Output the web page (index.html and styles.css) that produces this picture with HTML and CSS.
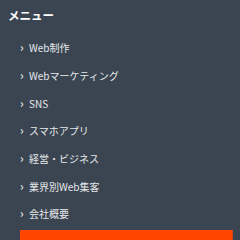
FILE: index.html
```html
<!DOCTYPE html>
<html lang="ja">
<head>
  <meta charset="UTF-8">
  <meta name="viewport" content="width=device-width, initial-scale=1.0">
  <title>メニュー</title>
  <link rel="stylesheet" href="styles.css">
</head>
<body>
  <nav class="menu">
    <h2 class="menu-title">メニュー</h2>
    <ul class="menu-list">
      <li class="menu-item"><a href="#">Web制作</a></li>
      <li class="menu-item"><a href="#">Webマーケティング</a></li>
      <li class="menu-item"><a href="#">SNS</a></li>
      <li class="menu-item"><a href="#">スマホアプリ</a></li>
      <li class="menu-item"><a href="#">経営・ビジネス</a></li>
      <li class="menu-item"><a href="#">業界別Web集客</a></li>
      <li class="menu-item"><a href="#">会社概要</a></li>
    </ul>
    <a class="contact-btn" href="#">お問い合わせ</a>
  </nav>
</body>
</html>
```

FILE: styles.css
```css
/* Side menu */
body {
  margin: 0;
  background: #3b4552;
  font-family: "Noto Sans CJK JP", "Noto Sans", sans-serif;
  overflow: hidden;
}

.menu {
  padding: 9px 7px 0 0;
}

.menu-title {
  margin: 0 0 0 8px;
  font-size: 11.5px;
  line-height: 12px;
  font-weight: bold;
  color: #fff;
}

.menu-list {
  list-style: none;
  margin: 12px 0 0;
  padding: 0 0 0 20px;
}

.menu-item {
  height: 27.7px;
  display: flex;
  align-items: center;
}

.menu-item a {
  color: #e6e8ea;
  text-decoration: none;
  font-size: 10px;
}

.menu-item a::before {
  content: "›";
  display: inline-block;
  width: 9px;
  font-size: 12px;
  color: #fff;
}

.contact-btn {
  display: block;
  margin: 3px 0 0 20px;
  padding: 8px 0 8px 8px;
  background: #ff4500;
  border-right: 1px solid #d8431a;
  color: #fff;
  text-decoration: none;
  font-size: 10px;
  font-weight: bold;
}
```
